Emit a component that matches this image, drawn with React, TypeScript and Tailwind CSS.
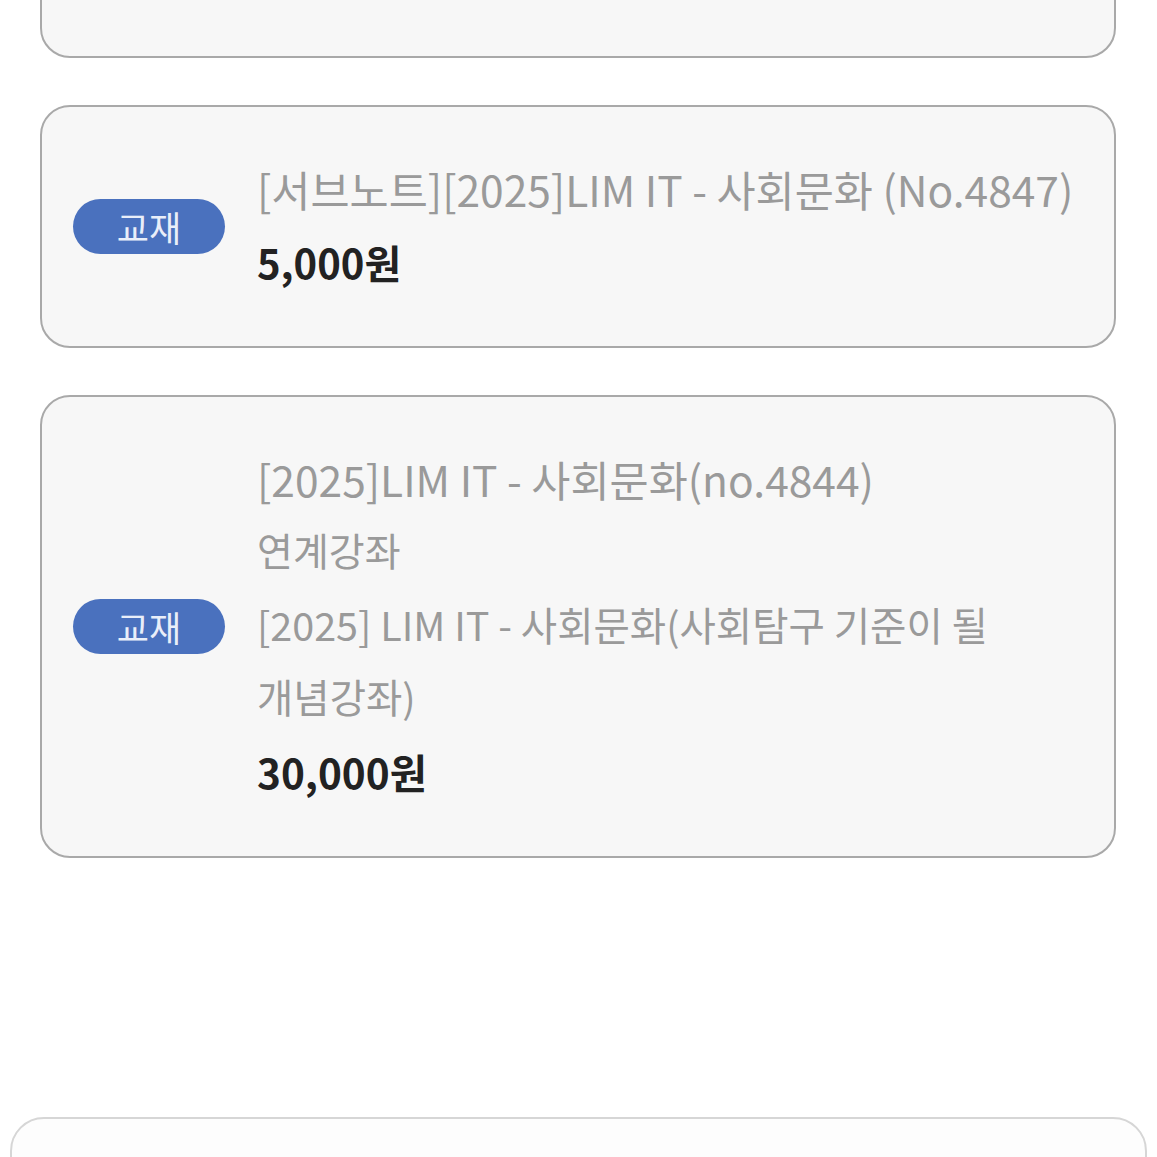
import React from "react";

function Badge() {
  return (
    <div className="flex h-[55px] w-[152px] shrink-0 items-center justify-center rounded-full bg-[#4a71be] text-[35px] leading-none text-[#e9eef9]">
      교재
    </div>
  );
}

function Card({ children }: { children: React.ReactNode }) {
  return (
    <div className="flex items-center rounded-[30px] border-2 border-[#a9a9a9] bg-[#f7f7f7] pl-[31px] pr-8 pt-[46px] pb-[47px]">
      <Badge />
      <div className="ml-[32px] flex flex-col">{children}</div>
    </div>
  );
}

export default function App() {
  return (
    <div
      className="min-h-[1157px] overflow-hidden bg-white"
      style={{ fontFamily: '"Noto Sans CJK KR", "Noto Sans", sans-serif' }}
    >
      <div className="flex flex-col gap-[47px] pl-[40px] pr-[41px]">
        <div className="-mt-[200px] h-[258px] rounded-[30px] border-2 border-[#a9a9a9] bg-[#f7f7f7]" />

        <Card>
          <div className="text-[42.5px] leading-[72px] text-[#9a9a9a] whitespace-nowrap">
            [서브노트][2025]LIM IT - 사회문화 (No.4847)
          </div>
          <div className="text-[40px] font-bold leading-[74px] text-[#222]">5,000원</div>
        </Card>

        <Card>
          <div className="text-[42.5px] leading-[72px] text-[#9a9a9a] whitespace-nowrap">
            [2025]LIM IT - 사회문화(no.4844)
          </div>
          <div className="text-[39px] leading-[68px] text-[#9a9a9a]">연계강좌</div>
          <div className="mt-[5px] text-[39.5px] leading-[72px] text-[#9a9a9a]">
            <div className="whitespace-nowrap">[2025] LIM IT - 사회문화(사회탐구 기준이 될</div>
            <div>개념강좌)</div>
          </div>
          <div className="mt-[3px] text-[40.5px] font-bold leading-[74px] text-[#222]">30,000원</div>
        </Card>
      </div>
      <div className="mx-[10px] mt-[259px] h-[120px] rounded-t-[34px] border-2 border-[#d6d6d6] bg-[#fdfdfd]" />
    </div>
  );
}
